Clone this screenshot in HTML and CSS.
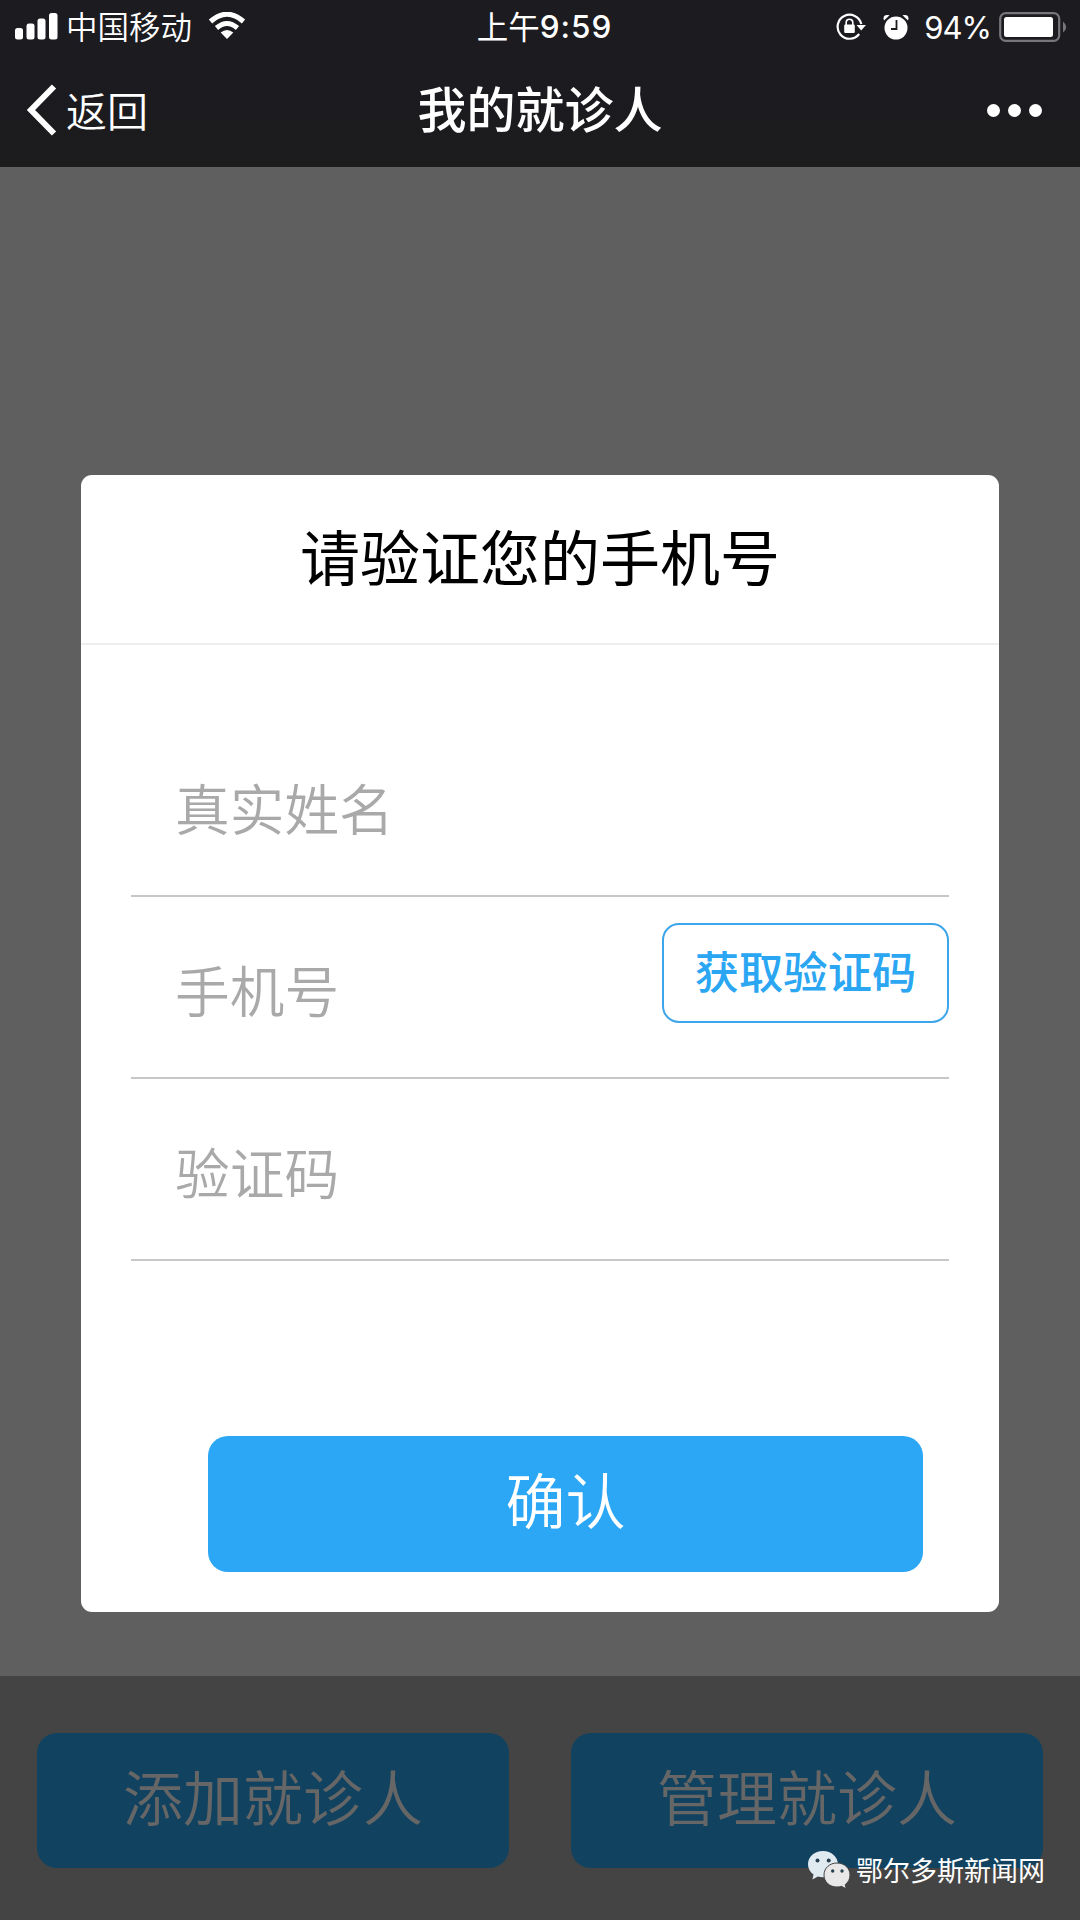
FILE: index.html
```
<!DOCTYPE html>
<html lang="zh-CN">
<head>
    <meta charset="UTF-8">
    <meta name="viewport" content="width=device-width, initial-scale=1.0">
    <title>我的就诊人</title>
    <link rel="stylesheet" href="styles.css">
</head>
<body>
    <header class="header">
        <div class="status-bar">
            <div class="status-left">
                <svg class="signal" width="43" height="27" viewBox="0 0 43 27" fill="#fff">
                    <rect x="0" y="15" width="8" height="11.5" rx="2.5"/>
                    <rect x="11.5" y="10.5" width="8" height="16" rx="2.5"/>
                    <rect x="22.5" y="5.5" width="8" height="21" rx="2.5"/>
                    <rect x="34" y="0" width="8.5" height="26.5" rx="2.5"/>
                </svg>
                <span class="carrier">中国移动</span>
                <svg class="wifi" width="38" height="28" viewBox="0 0 38 28">
                    <path d="M2.5 9.5Q19-5 35.5 9.5" fill="none" stroke="#fff" stroke-width="5"/>
                    <path d="M8.5 16Q19 7 29.5 16" fill="none" stroke="#fff" stroke-width="5"/>
                    <path d="M12.7 20.5Q19 15.5 25.3 20.5L19 27Z" fill="#fff"/>
                </svg>
            </div>
            <div class="time">上午<span>9:59</span></div>
            <div class="status-right">
                <svg width="30" height="28" viewBox="0 0 30 28">
                    <path d="M23.2 21A12 12 0 1 1 25.3 11" fill="none" stroke="#fff" stroke-width="2.2"/>
                    <path d="M20.5 12H30L25.2 17.5Z" fill="#fff"/>
                    <rect x="8.2" y="11.5" width="10.6" height="8.5" rx="1.2" fill="#fff"/>
                    <path d="M10.2 12V9.5a3.3 3.3 0 0 1 6.6 0V12" fill="none" stroke="#fff" stroke-width="1.6"/>
                </svg>
                <svg class="alarm" width="26" height="26" viewBox="0 0 26 26">
                    <circle cx="13" cy="14" r="11.5" fill="#fff"/>
                    <path d="M1 6.5C-.5 2 2 0 6.5 1.3Z" fill="#fff"/>
                    <path d="M25 6.5C26.5 2 24 0 19.5 1.3Z" fill="#fff"/>
                    <path d="M13.5 6V15H8" fill="none" stroke="#1b1b20" stroke-width="1.8"/>
                </svg>
                <span class="percent">94%</span>
                <svg width="69" height="30" viewBox="0 0 69 30">
                    <rect x="1.2" y="1.2" width="59" height="27.6" rx="5.5" fill="none" stroke="#77777b" stroke-width="2.2"/>
                    <rect x="5" y="5" width="49" height="20" rx="2.5" fill="#fff"/>
                    <path d="M64 9.5Q70.5 15 64 20.5Z" fill="#77777b"/>
                </svg>
            </div>
        </div>
        <nav class="nav">
            <a class="back">
                <svg width="31" height="52" viewBox="0 0 31 52">
                    <path d="M28 2.5L5 26L28 49.5" fill="none" stroke="#fff" stroke-width="6"/>
                </svg>
                <span>返回</span>
            </a>
            <h1>我的就诊人</h1>
            <div class="more"><i></i><i></i><i></i></div>
        </nav>
    </header>

    <main class="page">
        <form class="dialog">
            <h2>请验证您的手机号</h2>
            <div class="fields">
                <div class="field">
                    <input type="text" placeholder="真实姓名">
                </div>
                <div class="field">
                    <input type="tel" placeholder="手机号">
                    <button type="button" class="code-button">获取验证码</button>
                </div>
                <div class="field">
                    <input type="text" placeholder="验证码">
                </div>
            </div>
            <button type="button" class="confirm-button">确认</button>
        </form>
    </main>

    <footer class="footer">
        <button type="button" class="footer-button">添加就诊人</button>
        <button type="button" class="footer-button">管理就诊人</button>
        <div class="watermark">
            <svg width="43" height="38" viewBox="0 0 43 38">
                <path d="M15 0C6.5 0 0 5.9 0 13.3c0 4.2 2 7.8 5.5 10.2L4.4 28.5l5.5-3c1.7.5 3.3.7 5.1.7 8.4 0 15-5.7 15-12.9S23.4 0 15 0Z" fill="#e0eaf1"/>
                <path d="M29 12C21.5 12 16 17.2 16 24s5.5 12 13 12c1.6 0 3.1-.2 4.5-.7l4.7 2.5-1-4.2C40.2 31.4 42 28 42 24c0-6.8-5.6-12-13-12Z" fill="#e8e8e8" stroke="#444" stroke-width="1"/>
                <g fill="#294252">
                    <circle cx="9.5" cy="9.5" r="2"/>
                    <circle cx="20.7" cy="9.5" r="2"/>
                    <circle cx="24.7" cy="20" r="1.7"/>
                    <circle cx="34" cy="20" r="1.7"/>
                </g>
            </svg>
            <span>鄂尔多斯新闻网</span>
        </div>
    </footer>
</body>
</html>
```
FILE: styles.css
```
/* Global Styles */
* {
    box-sizing: border-box;
}

body {
    width: 1080px;
    height: 1920px;
    margin: 0;
    display: flex;
    flex-direction: column;
    font-family: "Noto Sans CJK SC", sans-serif;
    background: #5f5f5f;
    overflow: hidden;
}

h1, h2 {
    margin: 0;
}

button, input {
    font-family: inherit;
    padding: 0;
    border: none;
    background: none;
}

svg {
    display: block;
    flex: none;
}

/* Header */
.header {
    height: 167px;
    background: linear-gradient(#1b1b20 50%, #1c1c1d);
    color: #fff;
}

.status-bar {
    height: 53px;
    display: grid;
    grid-template-columns: 1fr auto 1fr;
    align-items: center;
    padding: 0 12px 0 15px;
    font-size: 31px;
    line-height: 46px;
}

.status-left, .status-right {
    display: flex;
    align-items: center;
}

.carrier {
    margin: -3px 16px 0 8px;
    font-size: 31.5px;
    font-weight: 350;
}

.wifi {
    margin-top: -1px;
}

.time {
    display: flex;
    margin: -2px 0 0 6px;
    font-size: 31.5px;
}

.time span {
    font-family: Inter, sans-serif;
    font-size: 31.5px;
    font-weight: 500;
    letter-spacing: 1px;
    padding-top: 2px;
}

.status-right {
    justify-content: flex-end;
}

.alarm {
    margin: 0 15px 0 17px;
}

.percent {
    font-family: Inter, sans-serif;
    font-size: 31px;
    letter-spacing: -1px;
    margin: 2px 8px 0 0;
}

.nav {
    height: 114px;
    display: grid;
    grid-template-columns: 1fr auto 1fr;
    align-items: center;
    padding: 0 38px 0 26px;
}

.back {
    display: flex;
    align-items: center;
    gap: 9px;
    font-size: 41px;
    font-weight: 350;
    line-height: 60px;
}

.back span {
    margin-top: -3px;
}

.nav h1 {
    font-size: 49px;
    font-weight: 500;
    line-height: 70px;
    margin-top: -6px;
    margin-left: 12px;
}

.more {
    display: flex;
    justify-content: flex-end;
    gap: 8px;
}

.more i {
    width: 13px;
    height: 13px;
    border-radius: 50%;
    background: #fff;
}

/* Dialog */
.page {
    height: 1509px;
    padding-top: 308px;
}

.dialog {
    width: 918px;
    height: 1137px;
    margin: 0 auto;
    background: #fff;
    border-radius: 11px;
}

.dialog h2 {
    height: 170px;
    border-bottom: 2px solid #eee;
    text-align: center;
    font-size: 60px;
    font-weight: 400;
    line-height: 159px;
    color: #000;
}

.fields {
    padding: 70px 50px 0;
}

.field {
    height: 182px;
    display: flex;
    border-bottom: 2px solid #c7c7c7;
}

.field input {
    flex: 1;
    min-width: 0;
    height: 180px;
    padding: 3px 0 0 44px;
    font-size: 54.7px;
    font-weight: 350;
}

.field input::placeholder {
    color: #a9a9a9;
    opacity: 1;
}

.code-button {
    width: 287px;
    height: 100px;
    margin-top: 26px;
    padding-bottom: 6px;
    border: 2px solid #3da5ea;
    border-radius: 17px;
    color: #2aa6f3;
    font-size: 44.3px;
    font-weight: 500;
    line-height: 88px;
}

.confirm-button {
    display: block;
    width: 715px;
    height: 136px;
    margin: 175px 0 0 127px;
    border-radius: 20px;
    background: #2ba7f5;
    color: #fff;
    font-size: 60px;
    font-weight: 350;
    line-height: 124px;
    padding-bottom: 12px;
}

/* Footer */
.footer {
    position: relative;
    height: 244px;
    display: flex;
    justify-content: space-between;
    padding: 57px 37px 0 37px;
    background: #444;
}

.footer-button {
    width: 472px;
    height: 135px;
    padding-bottom: 12px;
    border-radius: 20px;
    background: #114361;
    color: #666;
    font-size: 60px;
    font-weight: 350;
    line-height: 123px;
}

.watermark {
    position: absolute;
    right: 35px;
    bottom: 30px;
    display: flex;
    align-items: center;
    gap: 5px;
    color: #fff;
    font-size: 27px;
    line-height: 40px;
}
```
